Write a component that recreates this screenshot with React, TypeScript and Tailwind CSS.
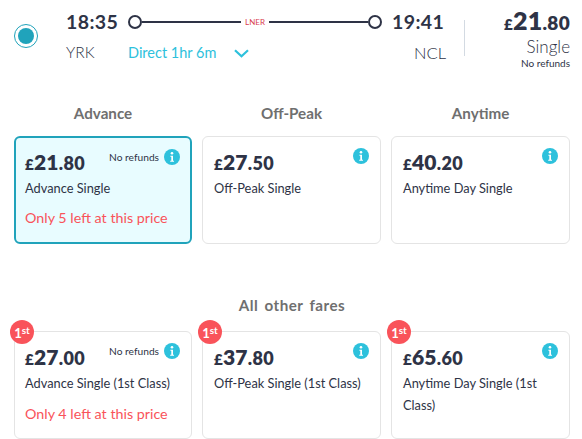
import React from "react";

function Info() {
  return (
    <svg width="16" height="16" viewBox="0 0 16 16" className="shrink-0">
      <circle cx="8" cy="8" r="8" fill="#2dc1dc" />
      <circle cx="8" cy="4.2" r="1.3" fill="#fff" />
      <path d="M6.4 6.7H9v5h1v1.1H6.2v-1.1h1.1V7.8h-.9z" fill="#fff" />
    </svg>
  );
}

type Fare = {
  pounds: string;
  pence: string;
  name: string;
  refunds?: boolean;
  left?: string;
  selected?: boolean;
  first?: boolean;
};

function Card({ pounds, pence, name, refunds, left, selected, first }: Fare) {
  return (
    <div
      className={
        "relative h-[108px] rounded-md " +
        (selected
          ? "border-2 border-[#20a3bb] bg-[#e8fcff] pl-[9px] pr-[10px] pt-[9px]"
          : "border border-[#e4e4e4] bg-white pl-[10px] pr-[11px] pt-[10px] [&:nth-child(n+2)]:pl-[11px]")
      }
    >
      {first && (
        <div className="absolute left-[-5px] top-[-12px] flex h-6 w-6 items-start justify-center rounded-full bg-[#f9535a] pt-[4px] text-[13px] font-bold leading-[18px] text-white">
          1<span className="text-[10px] leading-[12px]">st</span>
        </div>
      )}
      <div className="flex h-[30px] justify-between">
        <div className="h-[30px] font-extrabold leading-[30px] tracking-[0.2px] text-[#2e3346]">
          <span className="text-[15px]">£</span>
          <span className="text-[21px]">{pounds}</span>
          <span className="text-[18px] tracking-[0.4px]">.{pence}</span>
        </div>
        <div className={"flex items-start gap-[5px] " + (selected ? "pt-[2px]" : "pt-[1px]")}>
          {refunds && <span className="text-[10.2px] leading-[16px] text-[#2e3346]">No refunds</span>}
          <Info />
        </div>
      </div>
      <div className="text-[12.8px] leading-[22px] text-[#2e3346]">{name}</div>
      {left && (
        <div className={(selected ? "mt-[8px]" : "mt-[9px]") + " text-[14.3px] leading-[22px] text-[#f9535a]"}>{left}</div>
      )}
    </div>
  );
}

export default function App() {
  return (
    <div className="h-[439px] w-[582px] overflow-hidden bg-white pl-[14px] pr-[12px]">
      <div className="font-['Lato',sans-serif]">
        {/* Journey row */}
        <div className="flex h-[80px] items-start">
          <div className="mt-[24px] flex h-6 w-6 shrink-0 items-center justify-center rounded-full border border-[#20a3bb]">
            <div className="h-4 w-4 rounded-full bg-[#20a3bb]" />
          </div>
          <div className="ml-[28px] flex w-[380px] shrink-0 flex-col pt-[9px]">
            <div className="flex h-[26px] items-center text-[19.5px] font-bold tracking-[0.4px] text-[#2e3346]">
              <span className="w-[62px] shrink-0">18:35</span>
              <div className="h-[14px] w-[14px] shrink-0 rounded-full border-2 border-[#2e3346]" />
              <div className="h-[2px] flex-1 bg-[#2e3346]" />
              <span className="w-[28px] shrink-0 text-center text-[8px] font-normal tracking-normal text-[#d9404e]">LNER</span>
              <div className="h-[2px] flex-1 bg-[#2e3346]" />
              <div className="h-[14px] w-[14px] shrink-0 rounded-full border-2 border-[#2e3346]" />
              <span className="ml-[10px] w-[54px] shrink-0">19:41</span>
            </div>
            <div className="mt-[7px] flex h-[22px] items-center text-[15.5px] font-light text-[#2e3346]">
              <span className="w-[62px] shrink-0">YRK</span>
              <span className="text-[14.5px] font-normal text-[#2dc1dc]">Direct 1hr 6m</span>
              <svg width="15" height="9" viewBox="0 0 15 9" className="ml-[18px]" fill="none">
                <path d="M1 1.2l6.5 6 6.5-6" stroke="#2dc1dc" strokeWidth="2.2" />
              </svg>
              <span className="ml-auto text-[16.5px]">NCL</span>
            </div>
          </div>
          <div className="ml-[18px] mt-[20px] h-[36px] w-px shrink-0 bg-[#d3dae2]" />
          <div className="flex flex-1 flex-col items-end pt-[5px] text-[#2e3346]">
            <div className="h-[30px] font-extrabold leading-[30px] tracking-[0.3px]">
              <span className="text-[15px]">£</span>
              <span className="text-[25px]">21</span>
              <span className="text-[19px]">.80</span>
            </div>
            <div className="mt-[2px] text-[17px] font-light leading-[20px]">Single</div>
            <div className="text-[10px] leading-[12px]">No refunds</div>
          </div>
        </div>

        {/* Headers */}
        <div className="mt-[22px] grid h-[34px] grid-cols-[178px_179px_179px] gap-[10px] text-center text-[15.2px] font-bold leading-[22px] text-[#6f6f6f]">
          <div>Advance</div>
          <div>Off-Peak</div>
          <div>Anytime</div>
        </div>

        <div className="grid grid-cols-[178px_179px_179px] gap-[10px]">
          <Card pounds="21" pence="80" name="Advance Single" refunds left="Only 5 left at this price" selected />
          <Card pounds="27" pence="50" name="Off-Peak Single" />
          <Card pounds="40" pence="20" name="Anytime Day Single" />
        </div>

        <div className="mt-[50px] h-[37px] text-center text-[15.2px] font-bold leading-[22px] tracking-[0.5px] [word-spacing:2px] text-[#6f6f6f]">
          All other fares
        </div>

        <div className="grid grid-cols-[178px_179px_179px] gap-[10px]">
          <Card pounds="27" pence="00" name="Advance Single (1st Class)" refunds left="Only 4 left at this price" first />
          <Card pounds="37" pence="80" name="Off-Peak Single (1st Class)" first />
          <Card pounds="65" pence="60" name="Anytime Day Single (1st Class)" first />
        </div>
      </div>
    </div>
  );
}
